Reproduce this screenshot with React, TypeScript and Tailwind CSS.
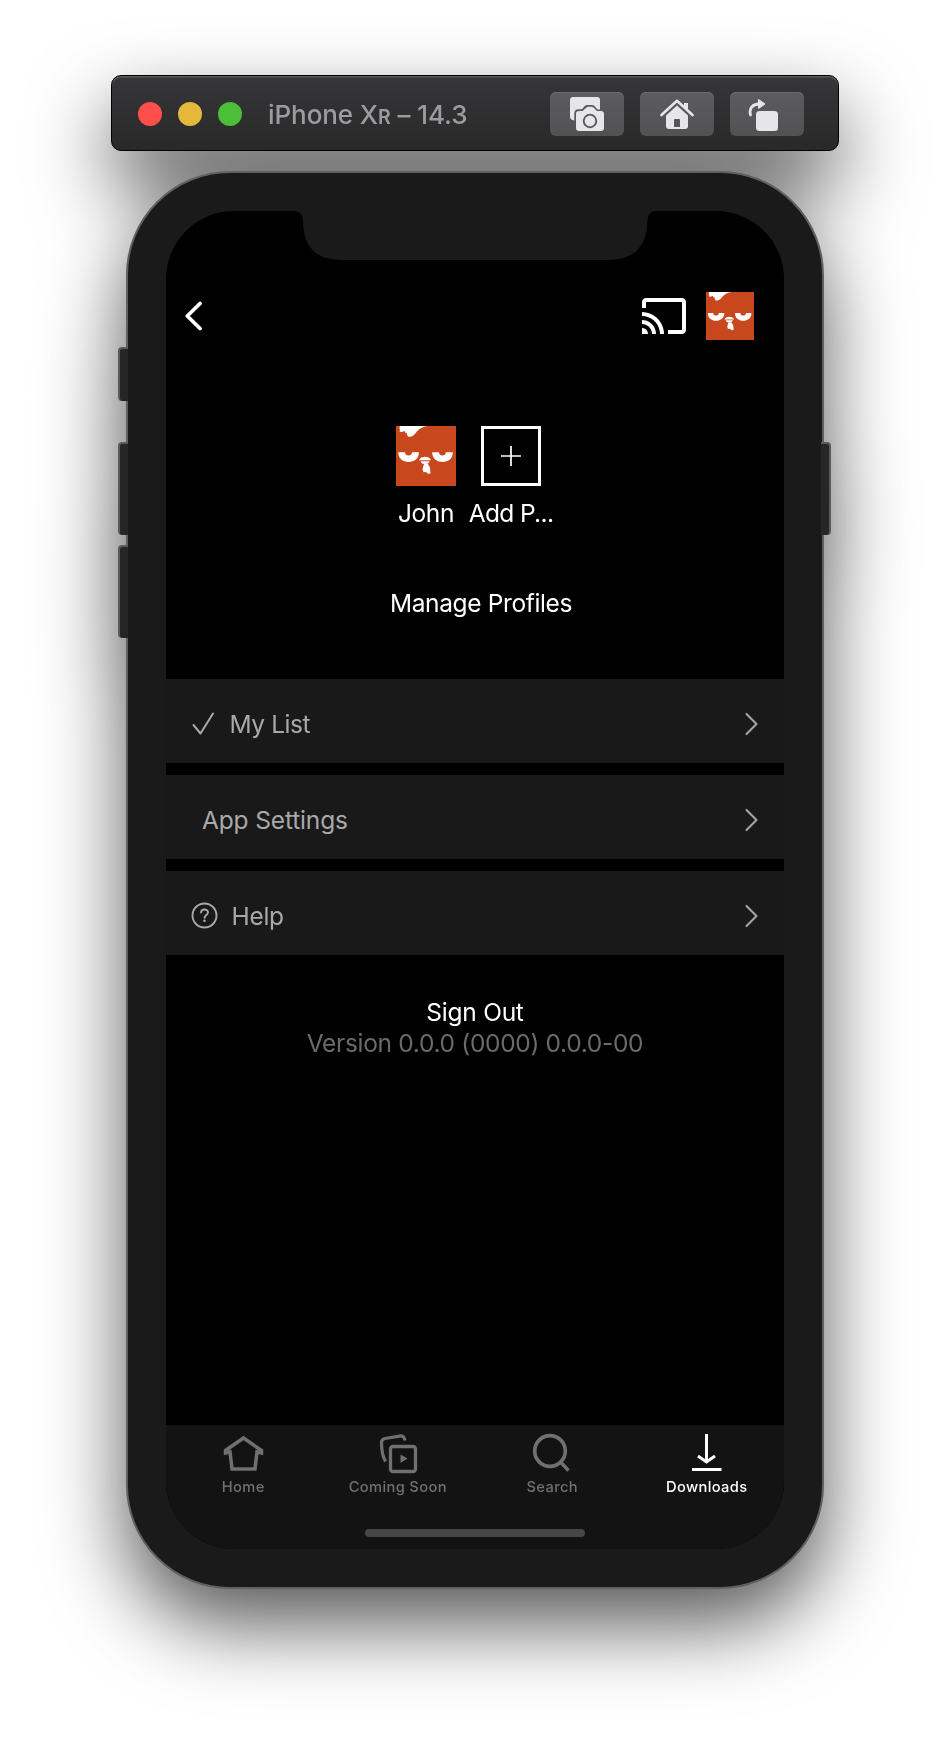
import type { ReactNode } from "react";

function Avatar({ size }: { size: number }) {
  return (
    <svg width={size} height={size} viewBox="0 0 60 60" className="block shrink-0">
      <rect width="60" height="60" fill="#c9471c" />
      <path d="M4 0H32C26 .8 23 3 20.500 6C18 9.800 15.500 11.200 12 10.500C11 9 10.500 8.500 11 7C9 7.200 8.500 6 8.800 4.800C7.500 5 7.500 6 5.500 6C3.500 6 3 4.500 4.200 3.500C3 2.500 3.500 1 4 0Z" fill="#fff" />
      <path d="M2.300 26.300H9C9.200 28.500 10.300 29.500 12.500 29.500C14.700 29.500 15.800 28.500 16 26.300H22.900C22.900 32.500 18.500 36 12.600 36C6.700 36 2.300 32.500 2.300 26.300Z" fill="#fff" />
      <path d="M36.200 26.300H43C43.200 28.500 44.200 29.500 46.400 29.500C48.600 29.500 49.700 28.500 49.900 26.300H56.800C56.800 32.500 52.400 36 46.500 36C40.600 36 36.200 32.500 36.200 26.300Z" fill="#fff" />
      <path d="M23 34.300C24.500 29.700 33.500 29.700 35 34.300Z" fill="#fff" />
      <path d="M24.500 35.200H33.500C33 37 31.500 38.200 29.300 38.200C27 38.200 25 37 24.500 35.200Z" fill="#fff" />
      <path d="M28 38H32L34 41.500L34.500 47.500L32 47.800L30 46L27.500 46.300L26.500 43Z" fill="#fff" />
    </svg>
  );
}

function ToolButton({ children }: { children: ReactNode }) {
  return (
    <button className="flex h-11 w-[74px] items-center justify-center rounded-[6px] bg-linear-to-b from-[#5c5c5e] to-[#525254] shadow-[inset_0_1px_0_#6c6c6e]">
      {children}
    </button>
  );
}

function TitleBar() {
  return (
    <header className="flex h-[76px] w-[728px] items-center rounded-[10px] border border-black bg-linear-to-b from-[#363638] to-[#29292a] pt-[2px] pr-[34px] pl-[26px] shadow-[inset_0_1.500px_0_#5c5c5e]">
      <div className="flex gap-4">
        <span className="size-6 rounded-full bg-[#ff4f4b]" />
        <span className="size-6 rounded-full bg-[#e2b93a]" />
        <span className="size-6 rounded-full bg-[#4cbf38]" />
      </div>
      <h1 className="ml-[26px] flex-1 pt-[3px] text-[26px] leading-8 font-medium tracking-[-0.08px] whitespace-pre text-[#9c9c9e]">
        iPhone X<span className="text-[19.500px] font-semibold">R</span> – 14.3
      </h1>
      <div className="flex gap-4">
        <ToolButton>
          <svg width="74" height="44" viewBox="0 0 74 44" fill="#e6e6e8">
            <path d="M23 5H47A3 3 0 0 1 50 8V17.500H47.500L44 13.500Q43.300 13 42 13H37Q36 13 35 13.700L32 17.300H28.500Q24.500 17.500 24.300 21V28.500Q20 28 20 24.500V8A3 3 0 0 1 23 5Z" />
            <path fillRule="evenodd" d="M29 19H32.500L36.500 15.400Q37.300 14.800 38.200 14.800H41.800Q42.700 14.800 43.500 15.400L47 19H51A3 3 0 0 1 54 22V36A3 3 0 0 1 51 39H29A3 3 0 0 1 26 36V22A3 3 0 0 1 29 19ZM40 21.800A7.200 7.200 0 1 0 40 36.200A7.200 7.200 0 1 0 40 21.800Z" />
            <circle cx="40" cy="29" r="5.400" />
          </svg>
        </ToolButton>
        <ToolButton>
          <svg width="74" height="44" viewBox="0 0 74 44" fill="#e6e6e8">
            <path d="M21.500 23L37 8.800L52.500 23" fill="none" stroke="#e6e6e8" strokeWidth="2.600" strokeLinecap="round" strokeLinejoin="round" />
            <path d="M44 11H48V18.500L44 15Z" />
            <path fillRule="evenodd" d="M37 13.500L48 23.500V34A3 3 0 0 1 45 37H29A3 3 0 0 1 26 34V23.500ZM34 28V35H40V28Q40 27 39 27H35Q34 27 34 28Z" />
          </svg>
        </ToolButton>
        <ToolButton>
          <svg width="74" height="44" viewBox="0 0 74 44" fill="#e6e6e8">
            <rect x="26" y="19" width="22" height="20" rx="3.500" />
            <path d="M20.500 23C18.800 16.500 22.500 12 29 12" fill="none" stroke="#e6e6e8" strokeWidth="2.800" strokeLinecap="round" />
            <path d="M28.500 7.500V16.500L35 12Z" stroke="#e6e6e8" strokeWidth="1" strokeLinejoin="round" />
          </svg>
        </ToolButton>
      </div>
    </header>
  );
}

function SideButton({ side, place }: { side: "left" | "right"; place: string }) {
  const edge = side === "left" ? "left-[-10px] rounded-l-[4px] border-l-2" : "right-[-9px] rounded-r-[4px] border-r-2";
  return <span className={`absolute w-[10px] border-t-2 border-[#5a5a5a] bg-[#262626] ${edge} ${place}`} />;
}

function Notch() {
  return (
    <svg width="618" height="49" viewBox="0 0 618 49" className="block shrink-0">
      <path d="M128 0Q136.500 0 137 9C137 35 149 49 176 49H442C468 49 481.500 35 481.500 9Q482 0 490.500 0Z" fill="#1a1a1a" />
    </svg>
  );
}

function MenuRow({ icon, label, pad, tracking }: { icon?: ReactNode; label: string; pad: string; tracking: string }) {
  return (
    <li className={`flex h-[84px] items-center bg-[#191919] pt-[5px] pr-[26px] text-[#a9a9a9] ${pad}`}>
      {icon}
      <span className={`flex-1 ${tracking}`}>{label}</span>
      <svg width="13" height="24" viewBox="0 0 13 24" fill="none" stroke="currentColor" strokeWidth="2" strokeLinecap="round" strokeLinejoin="round">
        <path d="M1.500 2L11.500 12L1.500 22" />
      </svg>
    </li>
  );
}

function Tab({ label, color, children }: { label: string; color: string; children: ReactNode }) {
  return (
    <div className={`flex flex-1 flex-col items-center ${color}`}>
      <svg width="44" height="44" viewBox="0 0 44 44" fill="none" stroke="currentColor" className="mt-[7px]">
        {children}
      </svg>
      <span className="mt-px text-[14.700px] leading-5 font-medium tracking-[0.35px]">{label}</span>
    </div>
  );
}

function TabBar() {
  return (
    <nav className="flex h-[124px] flex-col bg-[#131313]">
      <div className="flex">
        <Tab label="Home" color="text-[#707070]">
          <path d="M4.500 21V18.500L22.500 6L40.500 18.500V21L36 20L34 37H11L9 20Z" strokeWidth="3.500" />
        </Tab>
        <Tab label="Coming Soon" color="text-[#707070]">
          <path d="M9.500 29.500C7 25 5.500 16 5.500 10.500Q5.500 7.500 9 6.500L25 3.800Q28 3.500 29 8.500" strokeWidth="3.200" />
          <rect x="14.500" y="14.500" width="25" height="25" rx="2.500" strokeWidth="3.300" />
          <path d="M24.500 22.500L31.500 26.500L24.500 31Z" fill="currentColor" stroke="none" />
        </Tab>
        <Tab label="Search" color="text-[#707070]">
          <circle cx="20" cy="19" r="15.300" strokeWidth="3.700" />
          <path d="M30 29.500L38.500 38.500" strokeWidth="3.500" />
        </Tab>
        <Tab label="Downloads" color="text-white">
          <path d="M21.500 2V30M13 24L21.500 30L30 24" strokeWidth="3" />
          <path d="M7 37.500H36.500" strokeWidth="3" />
        </Tab>
      </div>
      <div className="mx-auto mt-8 h-2 w-[220px] rounded-full bg-[#464646]" />
    </nav>
  );
}

function Screen() {
  return (
    <main className="flex h-[1338px] w-[618px] flex-col overflow-hidden rounded-[68px] bg-black text-[24.500px] leading-[30px] tracking-[-0.36px] text-white">
      <Notch />
      <div className="flex h-[111px] items-center pr-[30px] pl-[17px]">
        <svg width="20" height="32" viewBox="0 0 20 32" fill="none" stroke="white" strokeWidth="3.800" strokeLinecap="round" strokeLinejoin="round">
          <path d="M17 3.500L4.300 16L17 28.500" />
        </svg>
        <svg width="48" height="48" viewBox="0 0 24 24" fill="white" className="mr-[18px] ml-auto">
          <path d="M21 3H3c-1.100 0-2 .9-2 2v3h2V5h18v14h-7v2h7c1.100 0 2-.9 2-2V5c0-1.100-.9-2-2-2zM1 18v3h3c0-1.660-1.340-3-3-3zm0-4v2c2.760 0 5 2.240 5 5h2c0-3.870-3.130-7-7-7zm0-4v2c4.970 0 9 4.030 9 9h2c0-6.080-4.930-11-11-11z" />
        </svg>
        <Avatar size={48} />
      </div>
      <section className="mt-[55px] flex pl-[218px]">
        <div className="flex w-[84px] flex-col items-center">
          <Avatar size={60} />
          <span className="mt-3">John</span>
        </div>
        <div className="flex w-[86px] flex-col items-center">
          <span className="flex size-[60px] items-center justify-center border-3 border-white">
            <svg width="20" height="20" viewBox="0 0 20 20" stroke="white" strokeWidth="1.700">
              <path d="M0 10H20M10 0V20" />
            </svg>
          </span>
          <span className="mt-3 tracking-[-0.65px] whitespace-nowrap">Add P...</span>
        </div>
      </section>
      <button className="mt-[60px] self-center pl-[12px]">Manage Profiles</button>
      <ul className="mt-[61px] flex flex-col gap-3">
        <MenuRow
          label="My List"
          pad="pl-[26px]"
          tracking="tracking-[-0.42px]"
          icon={
            <svg width="24" height="24" viewBox="0 0 24 24" fill="none" stroke="currentColor" strokeWidth="2" strokeLinecap="round" strokeLinejoin="round" className="mr-[13.500px]">
              <path d="M1.500 13L8.500 21.500L21 1.500" />
            </svg>
          }
        />
        <MenuRow label="App Settings" pad="pl-[36px]" tracking="tracking-[-0.15px]" />
        <MenuRow
          label="Help"
          pad="pl-[25px]"
          tracking="tracking-[-0.3px]"
          icon={
            <svg width="27" height="27" viewBox="0 0 27 27" fill="none" stroke="currentColor" strokeWidth="1.900" className="mr-[13.500px]">
              <circle cx="13.500" cy="13.500" r="12" />
              <path d="M10 10.500C10.200 6.500 17 6.500 17 10.300C17 13 13.600 12.800 13.600 15.700" strokeLinecap="round" />
              <circle cx="13.500" cy="18.800" r="1.300" fill="currentColor" stroke="none" />
            </svg>
          }
        />
      </ul>
      <section className="mt-[42px] flex flex-1 flex-col items-center">
        <button className="tracking-[-0.25px]">Sign Out</button>
        <p className="pt-px tracking-[-0.32px] whitespace-nowrap text-[#6a6a6a]">Version 0.0.0 (0000) 0.0.0-00</p>
      </section>
      <TabBar />
    </main>
  );
}

export default function App() {
  return (
    <div className="h-[1738px] w-[950px] overflow-hidden bg-white pt-[75px] font-['Inter','Liberation_Sans',sans-serif]">
      <div className="flex flex-col items-center gap-[20px] drop-shadow-[0_36px_40px_rgba(0,0,0,0.65)]">
        <TitleBar />
        <div className="relative flex h-[1418px] w-[698px] items-center justify-center rounded-[104px] border-2 border-[#606060] bg-[#1a1a1a]">
          <SideButton side="left" place="top-[174px] h-[54px]" />
          <SideButton side="left" place="top-[269px] h-[93px]" />
          <SideButton side="left" place="top-[372px] h-[93px]" />
          <SideButton side="right" place="top-[269px] h-[93px]" />
          <Screen />
        </div>
      </div>
    </div>
  );
}
